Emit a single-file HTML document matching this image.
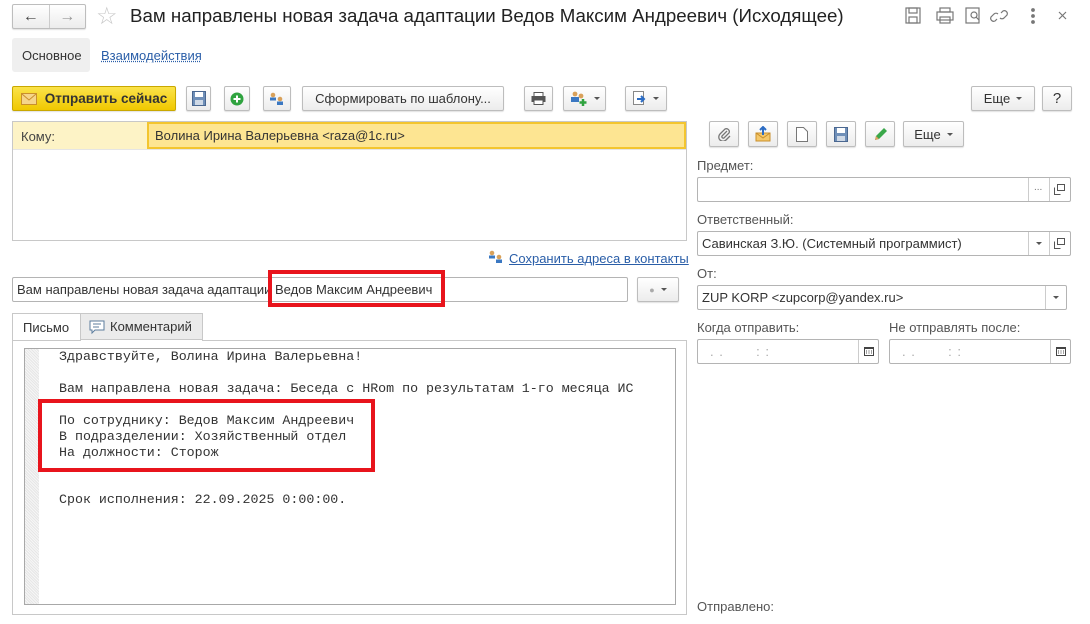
<!DOCTYPE html>
<html><head><meta charset="utf-8"><style>
*{box-sizing:border-box;margin:0;padding:0}
body{width:1090px;height:624px;background:#fff;font-family:"Liberation Sans",Arial,sans-serif;font-size:13px;color:#333;position:relative;overflow:hidden}
.a{position:absolute}
.btn{position:absolute;border:1px solid #bdbdbd;border-radius:2px;background:linear-gradient(#fff,#ececec);box-shadow:0 1px 1px rgba(0,0,0,.12);display:flex;align-items:center;justify-content:center;color:#333;font-size:13px}
.inp{position:absolute;border:1px solid #b4b4b4;border-radius:2px;background:#fff;height:25px}
.sep{position:absolute;top:0;bottom:0;border-left:1px solid #ccc}
.lbl{position:absolute;color:#555;font-size:13px}
.dd{width:0;height:0;border-left:3px solid transparent;border-right:3px solid transparent;border-top:3px solid #555;display:inline-block;margin-left:6px}
.ddb{position:absolute;width:0;height:0;border-left:3px solid transparent;border-right:3px solid transparent;border-top:3px solid #555}
.mono{font-family:"Liberation Mono","Courier New",monospace;font-size:13.3px;color:#333;position:absolute;left:59px;white-space:pre}
</style></head><body>

<!-- title bar -->
<div class="btn" style="left:12px;top:4px;width:74px;height:25px;justify-content:flex-start">
  <span style="width:36px;text-align:center;font-size:16px;color:#444">&#x2190;</span>
  <span style="border-left:1px solid #ccc;height:23px"></span>
  <span style="width:36px;text-align:center;font-size:16px;color:#999">&#x2192;</span>
</div>
<div class="a" style="left:96px;top:2px;font-size:24px;color:#c8c8c8">&#x2606;</div>
<div class="a" style="left:130px;top:5px;font-size:18.7px;color:#222">Вам направлены новая задача адаптации Ведов Максим Андреевич (Исходящее)</div>
<svg class="a" style="left:900px;top:4px" width="180" height="24" viewBox="0 0 180 24" fill="none" stroke="#777" stroke-width="1.2">
  <rect x="6" y="4" width="14" height="15"/><rect x="9" y="4" width="8" height="5"/><rect x="9" y="13" width="8" height="6"/>
  <rect x="37" y="8" width="16" height="8"/><rect x="40" y="4" width="10" height="4"/><rect x="40" y="13" width="10" height="6"/>
  <rect x="66" y="4" width="13" height="15"/><circle cx="74" cy="11" r="3"/><path d="M76 13l3 3"/>
  <path d="M97 15l-2 2a3 3 0 01-4-4l3-3a3 3 0 014 0M101 9l2-2a3 3 0 014 4l-3 3a3 3 0 01-4 0"/>
  <circle cx="133" cy="6" r="1.3" fill="#777"/><circle cx="133" cy="12" r="1.3" fill="#777"/><circle cx="133" cy="18" r="1.3" fill="#777"/>
  <path d="M159 8l7 7M166 8l-7 7"/>
</svg>

<!-- tabs -->
<div class="a" style="left:12px;top:38px;width:78px;height:34px;background:#efefef;border-radius:3px;padding:10px 0 0 10px;color:#333">Основное</div>
<div class="a" style="left:101px;top:48px;color:#2a5ea8;text-decoration:underline;text-decoration-style:dotted">Взаимодействия</div>

<!-- toolbar -->
<div class="btn" style="left:12px;top:86px;width:164px;height:25px;background:linear-gradient(#fbe34a,#f0c800);border-color:#c9a800;font-weight:bold;color:#333;font-size:13.5px">
  <svg width="16" height="12" style="margin-right:8px"><rect x="0.5" y="0.5" width="15" height="11" fill="#f5d58a" stroke="#c98f2c"/><path d="M1 1l7 6 7-6" stroke="#c98f2c" fill="none"/></svg>Отправить сейчас</div>
<div class="btn" style="left:186px;top:86px;width:25px;height:25px"><svg width="14" height="15"><rect x="0.5" y="0.5" width="13" height="14" fill="#6f8fb8" stroke="#4a6790"/><rect x="3" y="1" width="8" height="5" fill="#fff"/><rect x="3" y="9" width="8" height="5" fill="#cfd9e6"/></svg></div>
<div class="btn" style="left:224px;top:86px;width:26px;height:25px"><svg width="14" height="14"><circle cx="7" cy="7" r="6.5" fill="#2fa33f"/><path d="M7 3.5v7M3.5 7h7" stroke="#fff" stroke-width="2"/></svg></div>
<div class="btn" style="left:263px;top:86px;width:28px;height:25px"><svg width="16" height="14"><circle cx="4" cy="3" r="2.3" fill="#d9a15a"/><rect x="1" y="5.5" width="6" height="3" fill="#3b78c2"/><circle cx="11" cy="7" r="2.3" fill="#d9a15a"/><rect x="8" y="9.5" width="6" height="3.5" fill="#3b78c2"/></svg></div>
<div class="btn" style="left:302px;top:86px;width:202px;height:25px">Сформировать по шаблону...</div>
<div class="btn" style="left:524px;top:86px;width:29px;height:25px"><svg width="15" height="13"><rect x="0.5" y="4" width="14" height="6" fill="#555"/><rect x="3" y="0.5" width="9" height="4" fill="#fff" stroke="#555"/><rect x="3" y="8" width="9" height="4.5" fill="#fff" stroke="#555"/></svg></div>
<div class="btn" style="left:563px;top:86px;width:43px;height:25px"><svg width="18" height="15"><circle cx="5" cy="3" r="2.4" fill="#d9a15a"/><rect x="1" y="6" width="8" height="5" fill="#3b78c2"/><circle cx="11" cy="5" r="2.4" fill="#d9a15a"/><path d="M13 8v7M9.5 11.5h7" stroke="#2fa33f" stroke-width="2.5"/></svg><span class="dd"></span></div>
<div class="btn" style="left:625px;top:86px;width:42px;height:25px"><svg width="14" height="15"><rect x="0.5" y="0.5" width="10" height="13" fill="#fff" stroke="#888"/><path d="M4 8h6M8 5l3 3-3 3" stroke="#2b6cc4" stroke-width="2" fill="none"/></svg><span class="dd"></span></div>
<div class="btn" style="left:971px;top:86px;width:64px;height:25px">Еще<span class="dd"></span></div>
<div class="btn" style="left:1042px;top:86px;width:30px;height:25px;font-size:15px">?</div>

<!-- recipients -->
<div class="a" style="left:12px;top:121px;width:675px;height:120px;border:1px solid #c8c8c8"></div>
<div class="a" style="left:13px;top:122px;width:673px;height:28px;background:#fdf3c6;border-bottom:1px solid #e5e5e5"></div>
<div class="a" style="left:21px;top:129px;color:#444">Кому:</div>
<div class="a" style="left:147px;top:122px;width:539px;height:27px;background:#fde592;border:2px solid #f3c52f;padding:4px 0 0 6px;color:#333">Волина Ирина Валерьевна &lt;raza@1c.ru&gt;</div>

<svg class="a" style="left:488px;top:250px" width="16" height="14"><circle cx="4" cy="3" r="2.3" fill="#d9a15a"/><rect x="1" y="5.5" width="6" height="3" fill="#3b78c2"/><circle cx="11" cy="7" r="2.3" fill="#d9a15a"/><rect x="8" y="9.5" width="6" height="3.5" fill="#3b78c2"/></svg>
<div class="a" style="left:509px;top:251px;color:#2a5ea8;text-decoration:underline">Сохранить адреса в контакты</div>

<!-- subject -->
<div class="inp" style="left:12px;top:277px;width:616px;height:25px;padding:4px 0 0 4px;color:#333">Вам направлены новая задача адаптации Ведов Максим Андреевич</div>
<div class="btn" style="left:637px;top:277px;width:42px;height:25px;color:#aaa"><span style="font-size:9px">●</span><span class="dd"></span></div>
<div class="a" style="left:268px;top:270px;width:177px;height:37px;border:4px solid #e8141c"></div>

<!-- body tabs -->
<div class="a" style="left:12px;top:313px;width:69px;height:28px;border:1px solid #c8c8c8;border-bottom:none;background:#fff;padding:6px 0 0 10px">Письмо</div>
<div class="a" style="left:80px;top:313px;width:123px;height:27px;border:1px solid #c8c8c8;background:#ebebeb;padding:5px 0 0 8px;display:flex;align-items:flex-start">
  <svg width="16" height="15" style="margin-right:5px;margin-top:1px"><path d="M1 1h14v9H6l-3 3v-3H1z" fill="#fff" stroke="#5c7d9e"/><path d="M4 4h8M4 7h6" stroke="#5c7d9e"/></svg>Комментарий</div>
<div class="a" style="left:12px;top:340px;width:675px;height:275px;border:1px solid #c8c8c8;border-top:none"></div>
<div class="a" style="left:12px;top:340px;width:675px;border-top:1px solid #c8c8c8"></div>
<div class="a" style="left:81px;top:340px;width:121px;border-top:1px solid #fff"></div>
<div class="a" style="left:24px;top:348px;width:652px;height:257px;border:1px solid #a8a8a8"></div>
<div class="a" style="left:25px;top:349px;width:14px;height:255px;background:repeating-linear-gradient(45deg,#e6e6e6 0 1px,#f6f6f6 1px 2px)"></div>
<div class="mono" style="top:349px">Здравствуйте, Волина Ирина Валерьевна!</div>
<div class="mono" style="top:381px">Вам направлена новая задача: Беседа с HRom по результатам 1-го месяца ИС</div>
<div class="mono" style="top:413px">По сотруднику: Ведов Максим Андреевич</div>
<div class="mono" style="top:429px">В подразделении: Хозяйственный отдел</div>
<div class="mono" style="top:445px">На должности: Сторож</div>
<div class="mono" style="top:492px">Срок исполнения: 22.09.2025 0:00:00.</div>
<div class="a" style="left:38px;top:399px;width:337px;height:73px;border:4px solid #e8141c"></div>

<!-- right panel -->
<div class="btn" style="left:709px;top:121px;width:30px;height:26px"><svg width="14" height="14"><path d="M10 4l-5 5a1.5 1.5 0 002 2l5-5a3 3 0 00-4-4L3 7a4 4 0 006 6l4-4" stroke="#777" stroke-width="1.3" fill="none"/></svg></div>
<div class="btn" style="left:748px;top:121px;width:30px;height:26px"><svg width="16" height="16"><rect x="1" y="7" width="14" height="8" fill="#f5c86a" stroke="#c98f2c"/><path d="M1 7l7 5 7-5" stroke="#c98f2c" fill="none"/><path d="M8 9V1M5 4l3-3 3 3" stroke="#2b6cc4" stroke-width="2" fill="none"/></svg></div>
<div class="btn" style="left:787px;top:121px;width:30px;height:26px"><svg width="12" height="15"><path d="M0.5 0.5h7l4 4v10h-11z" fill="#fff" stroke="#777"/></svg></div>
<div class="btn" style="left:826px;top:121px;width:30px;height:26px"><svg width="14" height="15"><rect x="0.5" y="0.5" width="13" height="14" fill="#6f8fb8" stroke="#4a6790"/><rect x="3" y="1" width="8" height="5" fill="#fff"/><rect x="3" y="9" width="8" height="5" fill="#cfd9e6"/></svg></div>
<div class="btn" style="left:865px;top:121px;width:30px;height:26px"><svg width="15" height="15"><path d="M2 13l1-4 8-8 3 3-8 8z" fill="#3aa84a"/><path d="M2 13l1-4 3 3z" fill="#e0a060"/></svg></div>
<div class="btn" style="left:903px;top:121px;width:61px;height:26px">Еще<span class="dd"></span></div>

<div class="lbl" style="left:697px;top:158px">Предмет:</div>
<div class="inp" style="left:697px;top:177px;width:374px"><div class="sep" style="left:330px"></div><div class="sep" style="left:351px"></div><span class="a" style="left:336px;top:4px;font-size:10px;color:#777">...</span><svg class="a" style="left:356px;top:6px" width="11" height="11"><rect x="3.5" y="0.5" width="7" height="6" fill="none" stroke="#555"/><path d="M0.5 3.5v7h6" fill="none" stroke="#555"/></svg></div>

<div class="lbl" style="left:697px;top:212px">Ответственный:</div>
<div class="inp" style="left:697px;top:231px;width:374px;padding:4px 0 0 4px;color:#333">Савинская З.Ю. (Системный программист)<div class="sep" style="left:330px"></div><div class="sep" style="left:351px"></div><span class="ddb" style="left:338px;top:10px"></span><svg class="a" style="left:356px;top:6px" width="11" height="11"><rect x="3.5" y="0.5" width="7" height="6" fill="none" stroke="#555"/><path d="M0.5 3.5v7h6" fill="none" stroke="#555"/></svg></div>

<div class="lbl" style="left:697px;top:266px">От:</div>
<div class="inp" style="left:697px;top:285px;width:370px;padding:4px 0 0 4px;color:#333">ZUP KORP &lt;zupcorp@yandex.ru&gt;<div class="sep" style="left:347px"></div><span class="ddb" style="left:355px;top:10px"></span></div>

<div class="lbl" style="left:697px;top:320px">Когда отправить:</div>
<div class="lbl" style="left:889px;top:320px">Не отправлять после:</div>
<div class="inp" style="left:697px;top:339px;width:182px;padding:4px 0 0 12px;color:#aaa;letter-spacing:1px">. .&nbsp;&nbsp;&nbsp;&nbsp;&nbsp;&nbsp; : :<div class="sep" style="left:160px"></div><svg class="a" style="left:166px;top:6px" width="10" height="10"><rect x="0.5" y="1.5" width="9" height="8" fill="none" stroke="#444"/><rect x="0" y="1" width="10" height="2" fill="#444"/><path d="M2 5h1M4.5 5h1M7 5h1M2 7h1M4.5 7h1M7 7h1" stroke="#444"/></svg></div>
<div class="inp" style="left:889px;top:339px;width:182px;padding:4px 0 0 12px;color:#aaa;letter-spacing:1px">. .&nbsp;&nbsp;&nbsp;&nbsp;&nbsp;&nbsp; : :<div class="sep" style="left:160px"></div><svg class="a" style="left:166px;top:6px" width="10" height="10"><rect x="0.5" y="1.5" width="9" height="8" fill="none" stroke="#444"/><rect x="0" y="1" width="10" height="2" fill="#444"/><path d="M2 5h1M4.5 5h1M7 5h1M2 7h1M4.5 7h1M7 7h1" stroke="#444"/></svg></div>

<div class="lbl" style="left:697px;top:599px">Отправлено:</div>
</body></html>
